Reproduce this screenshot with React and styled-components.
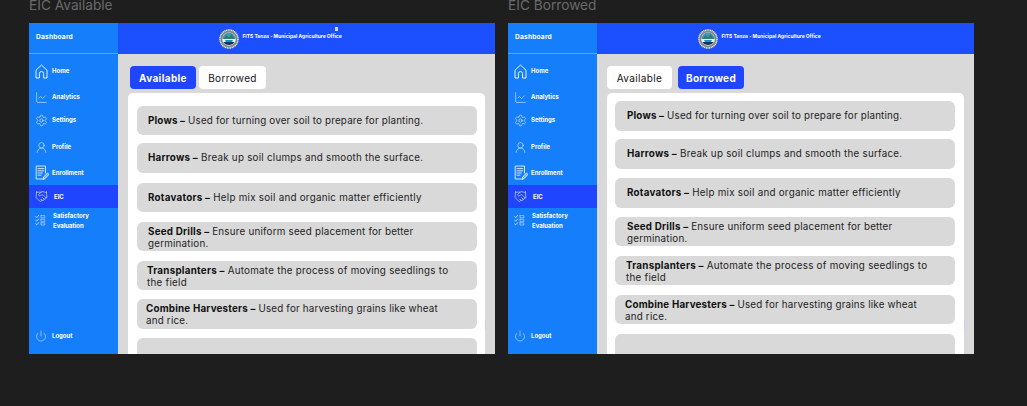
import React from 'react';
import styled, { createGlobalStyle } from 'styled-components';
import { ChartLine, Settings, UserRound, Handshake, Power } from 'lucide-react';

const Global = createGlobalStyle`
  html, body { margin: 0; padding: 0; background: #1e1e1e; overflow: hidden; }
  body { font-family: "Inter", "Liberation Sans", sans-serif; }
`;

const Canvas = styled.div`
  display: flex;
  gap: 13px;
  padding-left: 29px;
  height: 406px;
  box-sizing: border-box;
`;
const Column = styled.div`
  display: flex;
  flex-direction: column;
  width: 466px;
`;
const Title = styled.div`
  height: 23px;
  line-height: 10px;
  font-size: 13.7px;
  color: #6a6a6a;
`;
const Frame = styled.div`
  position: relative;
  display: grid;
  grid-template-columns: 89px minmax(0, 1fr);
  grid-template-rows: 31px minmax(0, 1fr);
  height: 331px;
  overflow: hidden;
  background: #d9d9d9;
`;
const Brand = styled.div`
  display: flex;
  align-items: center;
  padding: 0 0 2px 7px;
  background: #157efb;
  border-bottom: 1px solid #5aa5fc;
  color: #fff;
  font-size: 6.6px;
  font-weight: 700;
  letter-spacing: 0.2px;
`;
const Header = styled.div`
  display: flex;
  align-items: center;
  justify-content: center;
  gap: 3px;
  padding-right: 52px;
  background: #1c50ff;
  color: #fff;
  font-size: 4.95px;
  font-weight: 700;
`;
const HeaderText = styled.span`
  position: relative;
  top: -3px;
`;
const Seal = styled.svg`
  width: 20px;
  height: 20px;
  flex: none;
`;
const Sidebar = styled.nav`
  display: flex;
  flex-direction: column;
  min-height: 0;
  background: #157efb;
  padding-bottom: 10px;
`;
const NavItem = styled.div`
  display: flex;
  align-items: center;
  flex: none;
  height: ${p => p.$h}px;
  padding-left: 6px;
  background: ${p => (p.$active ? '#1f45ff' : 'transparent')};
  color: #fff;
  font-size: 6px;
  font-weight: 700;
  line-height: 9.5px;
  margin-top: ${p => (p.$bottom ? 'auto' : '0')};
`;
const IconSlot = styled.span`
  display: flex;
  align-items: center;
  flex: none;
  width: ${p => p.$w ?? 17}px;
`;
const Main = styled.main`
  min-width: 0;
  min-height: 0;
  overflow: hidden;
  padding: 12px 10px 0 10px;
`;
const Tabs = styled.div`
  display: flex;
  gap: ${p => p.$gap}px;
  margin-left: ${p => p.$ml}px;
  height: 23px;
`;
const Tab = styled.div`
  display: flex;
  align-items: center;
  justify-content: center;
  width: ${p => p.$w}px;
  border-radius: 4px;
  font-size: 10px;
  letter-spacing: 0.35px;
  font-weight: ${p => (p.$on ? 700 : 400)};
  background: ${p => (p.$on ? '#1f45ff' : '#fff')};
  color: ${p => (p.$on ? '#fff' : '#111')};
`;
const Card = styled.section`
  margin-top: 4px;
  height: 280px;
  padding: ${p => p.$pt}px ${p => p.$pr}px 0 ${p => p.$pl}px;
  background: #fff;
  border-radius: 5px 5px 0 0;
  overflow: hidden;
`;
const Row = styled.div`
  display: flex;
  align-items: center;
  box-sizing: border-box;
  height: ${p => p.$h}px;
  margin-top: ${p => p.$mt}px;
  padding-left: ${p => p.$pl}px;
  padding-top: ${p => (p.$two ? 2 : 0)}px;
  background: #d9d9d9;
  border-radius: 6px;
  color: #222;
  font-size: 9.8px;
  line-height: 11.8px;
  letter-spacing: ${p => p.$ls}px;
  b { font-weight: 700; color: #111; }
`;
const Speck = styled.span`
  position: absolute;
  left: 306px;
  top: 4px;
  width: 3px;
  height: 4px;
  background: #cfd9ff;
`;
const ScrollMark = styled.span`
  position: absolute;
  right: 9px;
  top: 297px;
  width: 1px;
  height: 10px;
  background: #c5cdfa;
`;

const SealIcon = () => (
  <Seal viewBox="0 0 40 40">
    <circle cx="20" cy="20" r="19.5" fill="#7d8488" />
    <circle cx="20" cy="20" r="18" fill="none" stroke="#e8e8e8" strokeWidth="3" strokeDasharray="2 1.4" />
    <circle cx="20" cy="20" r="13.5" fill="#dfe7ea" />
    <path d="M7 20a13 13 0 0 1 26 0z" fill="#3f9bb4" />
    <path d="M9 20l6-8 5 5 5-7 7 10z" fill="#2a7f72" />
    <path d="M7 20h26a13 13 0 0 1-1.5 6h-23A13 13 0 0 1 7 20z" fill="#eef2f2" />
    <path d="M9 26h22a13 13 0 0 1-22 0z" fill="#14305e" />
    <path d="M12 22h16l-2 4H14z" fill="#1d8fc0" />
  </Seal>
);

const HomeIcon = () => (
  <svg width="13" height="15" viewBox="0 0 13 15" fill="none" stroke="#fff" strokeWidth="0.9" strokeLinejoin="round">
    <path d="M1 6.2 6.5 1 12 6.2V14H8.6V9.6a2.1 2.1 0 0 0-4.2 0V14H1z" />
  </svg>
);

const EnrollIcon = () => (
  <svg width="14" height="15" viewBox="0 0 14 15" fill="none" stroke="#fff" strokeWidth="0.8" strokeLinecap="round" strokeLinejoin="round">
    <path d="M7.5 14H1.2V1h9.3v7" />
    <path d="M3 3.6h5.8M3 5.8h5.8M3 8h4.4M3 10.2h3" />
    <path d="M8.2 14.2l.5-2.2 3.8-4 1.5 1.4-3.8 4z" fill="#fff" fillOpacity="0.35" />
  </svg>
);

const ChecksIcon = () => (
  <svg width="11" height="11" viewBox="0 0 11 11" fill="none" stroke="#fff" strokeWidth="0.7" strokeLinecap="round" strokeLinejoin="round">
    {[1.6, 5.2, 8.8].map(y => (
      <g key={y}>
        <path d={`M0.6 ${y}l1.1 1 2-2.2`} />
        <path d={`M6 ${y - 1}h3.8v2.2H6z`} strokeDasharray="1 0.8" strokeOpacity="0.7" />
      </g>
    ))}
  </svg>
);

const iconProps = { color: '#fff', strokeWidth: 1 };

const Nav = () => (
  <Sidebar>
    <NavItem $h={34}><IconSlot><HomeIcon /></IconSlot>Home</NavItem>
    <NavItem $h={18}><IconSlot><ChartLine size={13} {...iconProps} /></IconSlot>Analytics</NavItem>
    <NavItem $h={28}><IconSlot><Settings size={13} {...iconProps} /></IconSlot>Settings</NavItem>
    <NavItem $h={26}><IconSlot><UserRound size={13} {...iconProps} /></IconSlot>Profile</NavItem>
    <NavItem $h={25}><IconSlot><EnrollIcon /></IconSlot>Enrollment</NavItem>
    <NavItem $h={23} $active><IconSlot $w={19}><Handshake size={13} {...iconProps} /></IconSlot>EIC</NavItem>
    <NavItem $h={25}><IconSlot $w={18}><ChecksIcon /></IconSlot><span>Satisfactory<br />Evaluation</span></NavItem>
    <NavItem $h={16} $bottom><IconSlot><Power size={12} {...iconProps} /></IconSlot>Logout</NavItem>
  </Sidebar>
);

const ITEMS = [
  { b: 'Plows –', t: ' Used for turning over soil to prepare for planting.', ls: 0.18 },
  { b: 'Harrows –', t: ' Break up soil clumps and smooth the surface.', ls: 0.25 },
  { b: 'Rotavators –', t: ' Help mix soil and organic matter efficiently', ls: 0.26 },
  { b: 'Seed Drills –', t: ' Ensure uniform seed placement for better', t2: 'germination.', ls: 0.22 },
  { b: 'Transplanters –', t: ' Automate the process of moving seedlings to', t2: 'the field', ls: 0.26 },
  { b: 'Combine Harvesters –', t: ' Used for harvesting grains like wheat', t2: 'and rice.', ls: 0.2 },
];

const Screen = ({ title, active, tabs, rows, card, speck }) => (
  <Column>
    <Title>{title}</Title>
    <Frame>
      <Brand>Dashboard</Brand>
      <Header>
        <SealIcon />
        <HeaderText>FITS Tanza - Municipal Agriculture Office</HeaderText>
      </Header>
      <Nav />
      <Main>
        <Tabs $gap={tabs.gap} $ml={tabs.ml}>
          <Tab $w={tabs.a} $on={active === 'a'}>Available</Tab>
          <Tab $w={tabs.b} $on={active === 'b'}>Borrowed</Tab>
        </Tabs>
        <Card $pt={card.pt} $pl={card.pl} $pr={card.pr}>
          {rows.map((r, i) => {
            const item = ITEMS[i];
            return (
              <Row key={i} $h={r.h} $mt={r.mt} $pl={r.pl} $two={item?.t2} $ls={item?.ls ?? 0}>
                {item && (
                  <span>
                    <b>{item.b}</b>{item.t}
                    {item.t2 && <><br />{item.t2}</>}
                  </span>
                )}
              </Row>
            );
          })}
        </Card>
      </Main>
      {speck && <Speck />}
      <ScrollMark />
    </Frame>
  </Column>
);

const rowsA = [
  { h: 29, mt: 0, pl: 11 }, { h: 30, mt: 8, pl: 11 }, { h: 29, mt: 10, pl: 11 },
  { h: 29, mt: 10, pl: 11 }, { h: 29, mt: 10, pl: 10 }, { h: 30, mt: 9, pl: 9 }, { h: 40, mt: 9, pl: 0 },
];
const rowsB = [
  { h: 30, mt: 0, pl: 12 }, { h: 30, mt: 8, pl: 12 }, { h: 30, mt: 9, pl: 12 },
  { h: 29, mt: 9, pl: 12 }, { h: 29, mt: 10, pl: 11 }, { h: 29, mt: 10, pl: 10 }, { h: 40, mt: 10, pl: 0 },
];

export default function App() {
  return (
    <>
      <Global />
      <Canvas>
        <Screen title="EIC Available" active="a" speck
          tabs={{ gap: 3, ml: 2, a: 66, b: 67 }} rows={rowsA} card={{ pt: 13, pl: 9, pr: 8 }} />
        <Screen title="EIC Borrowed" active="b"
          tabs={{ gap: 6, ml: 0, a: 65, b: 66 }} rows={rowsB} card={{ pt: 8, pl: 8, pr: 9 }} />
      </Canvas>
    </>
  );
}
